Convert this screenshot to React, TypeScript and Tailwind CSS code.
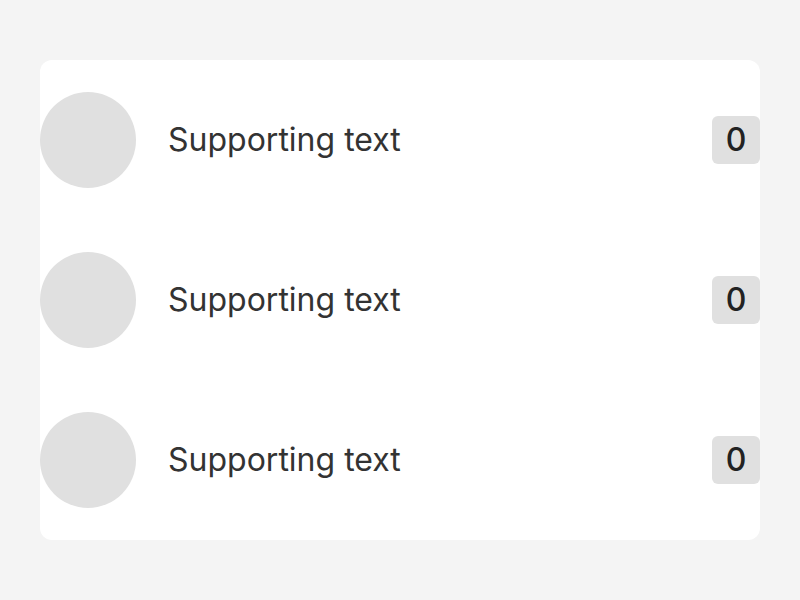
import React from "react";

const rows = [0, 1, 2];

const App = () => {
  return (
    <div className="w-[800px] h-[600px] bg-[#f4f4f4] px-10 py-[60px] font-['Inter',sans-serif]">
      <div className="flex flex-col h-[480px] bg-white rounded-xl">
        {rows.map((i) => (
          <div key={i} className="flex items-center h-[160px]">
            <div className="w-24 h-24 rounded-full bg-[#e0e0e0] shrink-0" />
            <span className="ml-8 text-[32px] text-[#333333] flex-1">
              Supporting text
            </span>
            <div className="flex items-center justify-center w-12 h-12 rounded-md bg-[#e0e0e0] text-[32px] font-medium text-[#222222]">
              0
            </div>
          </div>
        ))}
      </div>
    </div>
  );
};

export default App;
